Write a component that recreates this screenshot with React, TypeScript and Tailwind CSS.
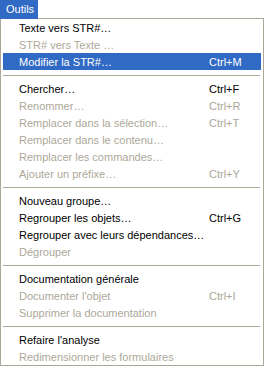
import React from "react";

type MenuEntry =
  | { type: "item"; label: string; shortcut?: string; disabled?: boolean; active?: boolean }
  | { type: "sep" };

const entries: MenuEntry[] = [
  { type: "item", label: "Texte vers STR#…" },
  { type: "item", label: "STR# vers Texte …", disabled: true },
  { type: "item", label: "Modifier la STR#…", shortcut: "Ctrl+M", active: true },
  { type: "sep" },
  { type: "item", label: "Chercher…", shortcut: "Ctrl+F" },
  { type: "item", label: "Renommer…", shortcut: "Ctrl+R", disabled: true },
  { type: "item", label: "Remplacer dans la sélection…", shortcut: "Ctrl+T", disabled: true },
  { type: "item", label: "Remplacer dans le contenu…", disabled: true },
  { type: "item", label: "Remplacer les commandes…", disabled: true },
  { type: "item", label: "Ajouter un préfixe…", shortcut: "Ctrl+Y", disabled: true },
  { type: "sep" },
  { type: "item", label: "Nouveau groupe…" },
  { type: "item", label: "Regrouper les objets…", shortcut: "Ctrl+G" },
  { type: "item", label: "Regrouper avec leurs dépendances…" },
  { type: "item", label: "Dégrouper", disabled: true },
  { type: "sep" },
  { type: "item", label: "Documentation générale" },
  { type: "item", label: "Documenter l'objet", shortcut: "Ctrl+I", disabled: true },
  { type: "item", label: "Supprimer la documentation", disabled: true },
  { type: "sep" },
  { type: "item", label: "Refaire l'analyse" },
  { type: "item", label: "Redimensionner les formulaires", disabled: true },
];

const App = () => {
  return (
    <div
      className="w-[265px] h-[367px] bg-white text-[11px] leading-none flex flex-col"
      style={{ fontFamily: '"Liberation Sans", Arial, sans-serif' }}
    >
      {/* Menu bar title */}
      <div className="flex h-[19px] shrink-0">
        <div className="w-[38px] h-[19px] bg-[#316ac5] text-white pl-[6px] flex items-center">Outils</div>
        <div className="w-[226px] border-b border-[#aca899]" />
      </div>

      {/* Dropdown */}
      <div className="w-[264px] border-l border-r border-b border-[#aca899] px-[2px] flex flex-col">
        {entries.map((entry, i) => {
          if (entry.type === "sep") {
            return (
              <div key={i} className="h-[10px] shrink-0 pt-[5px] pr-[1px]">
                <div className="w-full h-px bg-[#aca899]" />
              </div>
            );
          }
          const color = entry.active ? "bg-[#316ac5] text-white" : entry.disabled ? "text-[#aca899]" : "text-black";
          return (
            <div key={i} className={`h-[17px] shrink-0 flex items-center pl-[16px] pt-px ${color}`}>
              <span className="w-[190px] whitespace-nowrap">{entry.label}</span>
              {entry.shortcut && <span className="whitespace-nowrap">{entry.shortcut}</span>}
            </div>
          );
        })}
      </div>
    </div>
  );
};

export default App;
